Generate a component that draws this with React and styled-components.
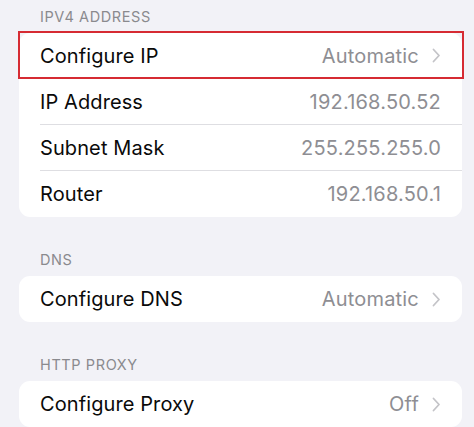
import styled, { createGlobalStyle } from "styled-components";

const GlobalStyle = createGlobalStyle`
  html, body {
    margin: 0;
    padding: 0;
    background: #f2f2f7;
  }
  body {
    font-family: Inter, "Liberation Sans", sans-serif;
    -webkit-font-smoothing: antialiased;
  }
`;

const Page = styled.div`
  padding: 8px 12px 0 19px;
  height: 427px;
  overflow: hidden;
  box-sizing: border-box;
`;

const Section = styled.section`
  & + & {
    margin-top: 34px;
  }
`;

const Header = styled.div`
  font-size: 14.5px;
  line-height: 18px;
  color: #8a8a8e;
  letter-spacing: 0.6px;
  padding: 0 21px 7px;
`;

const Card = styled.div`
  background: #ffffff;
  border-radius: 11px;
`;

const Row = styled.div`
  position: relative;
  height: 46px;
  display: flex;
  align-items: center;
  padding-left: 21px;

  &::after {
    content: "";
    display: ${(props) => (props.$highlighted ? "block" : "none")};
    position: absolute;
    top: -2px;
    left: -1px;
    right: -2px;
    bottom: 0;
    border: 2px solid #d62b33;
  }
`;

const RowInner = styled.div`
  flex: 1;
  height: 100%;
  display: flex;
  align-items: center;
  justify-content: space-between;
  padding-right: 21px;
  border-bottom: ${(props) => (props.$last ? "none" : "1px solid #dedee2")};
  box-sizing: border-box;
`;

const Label = styled.span`
  font-size: 20px;
  color: #0a0a0a;
  letter-spacing: 0.1px;
`;

const Value = styled.span`
  display: flex;
  align-items: center;
  gap: 13px;
  font-size: 20px;
  color: #8e8e93;
  letter-spacing: 0.2px;
`;

const Chevron = () => (
  <svg width="9" height="15" viewBox="0 0 9 15" fill="none">
    <path
      d="M1.5 1.5L7 7.5L1.5 13.5"
      stroke="#c4c4c8"
      strokeWidth="1.8"
      strokeLinecap="round"
      strokeLinejoin="round"
    />
  </svg>
);

const sections = [
  {
    title: "IPV4 ADDRESS",
    rows: [
      { label: "Configure IP", value: "Automatic", chevron: true, highlighted: true },
      { label: "IP Address", value: "192.168.50.52" },
      { label: "Subnet Mask", value: "255.255.255.0" },
      { label: "Router", value: "192.168.50.1" },
    ],
  },
  {
    title: "DNS",
    rows: [{ label: "Configure DNS", value: "Automatic", chevron: true }],
  },
  {
    title: "HTTP PROXY",
    rows: [{ label: "Configure Proxy", value: "Off", chevron: true }],
  },
];

const App = () => (
  <>
    <GlobalStyle />
    <Page>
      {sections.map((section) => (
        <Section key={section.title}>
          <Header>{section.title}</Header>
          <Card>
            {section.rows.map((row, i) => (
              <Row key={row.label} $highlighted={row.highlighted}>
                <RowInner $last={i === section.rows.length - 1}>
                  <Label>{row.label}</Label>
                  <Value>
                    {row.value}
                    {row.chevron && <Chevron />}
                  </Value>
                </RowInner>
              </Row>
            ))}
          </Card>
        </Section>
      ))}
    </Page>
  </>
);

export default App;
